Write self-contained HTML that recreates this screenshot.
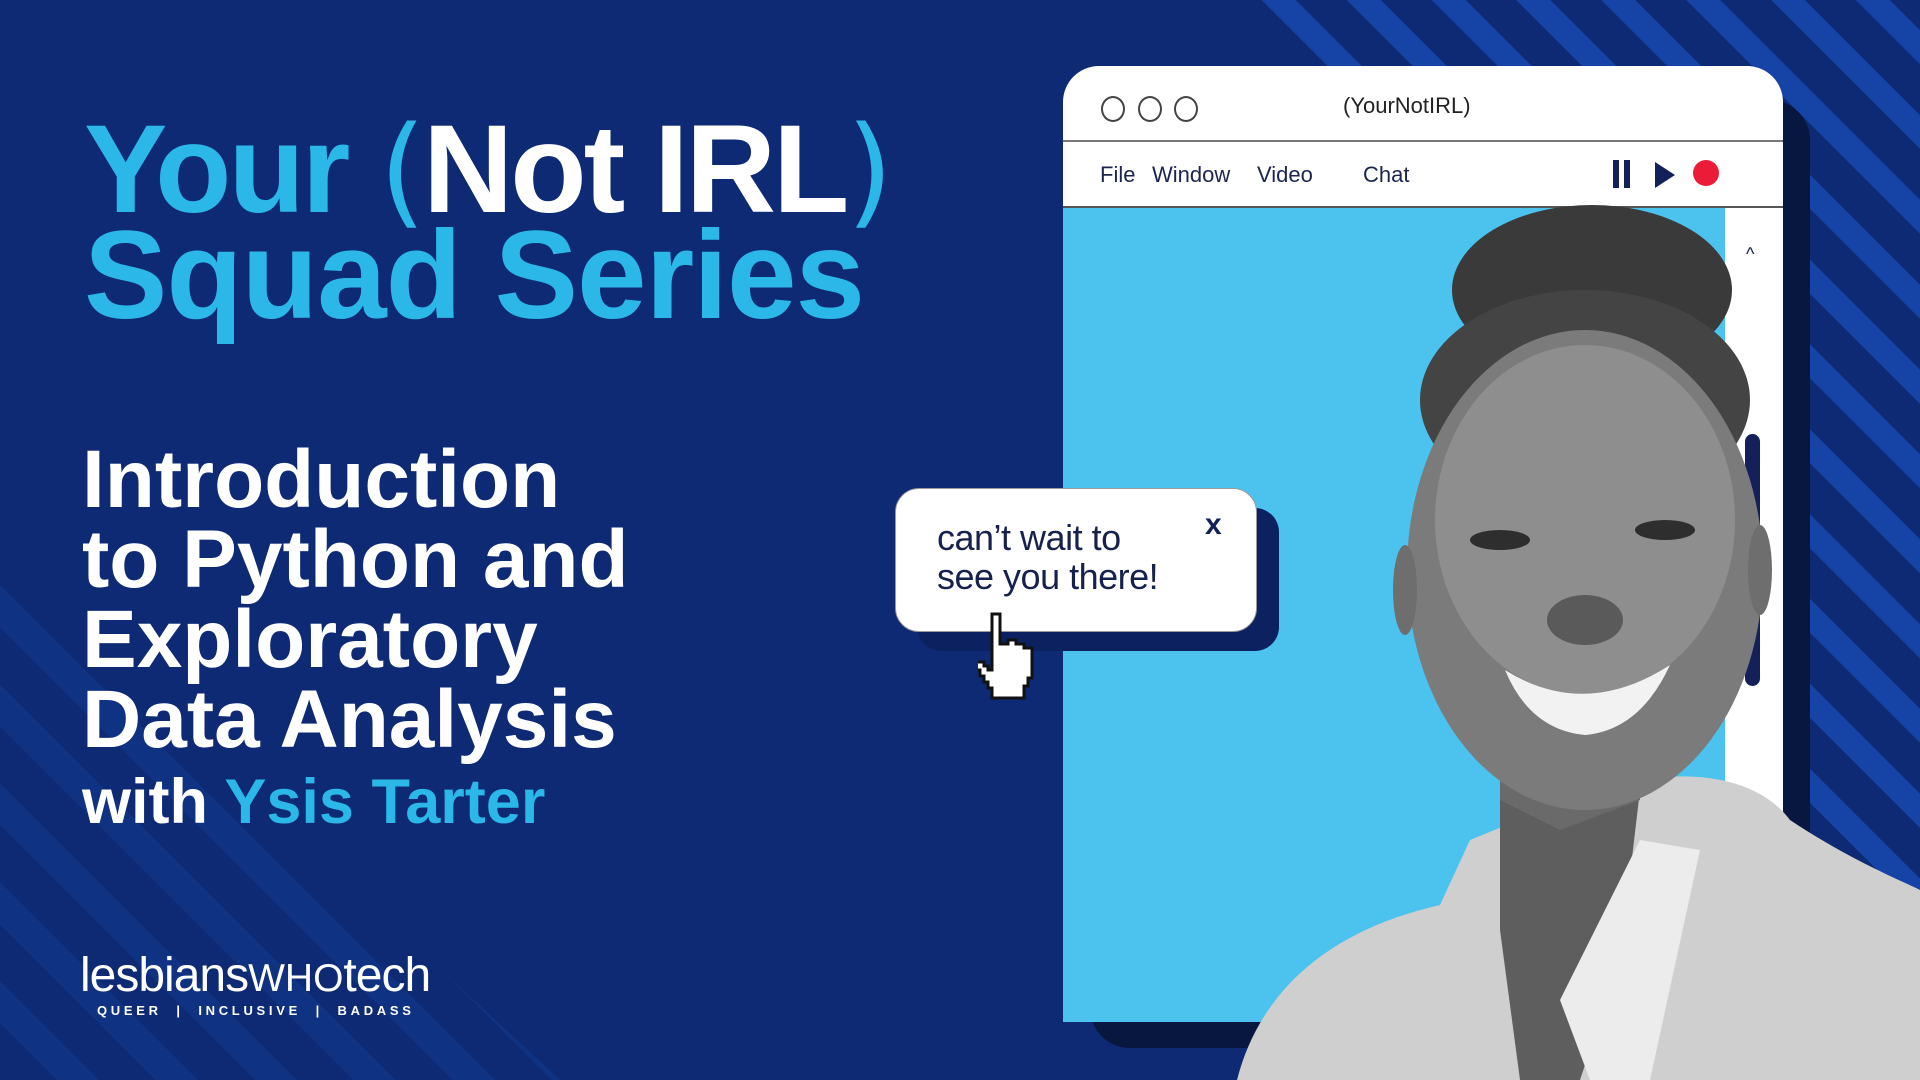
<!DOCTYPE html>
<html><head><meta charset="utf-8">
<style>
html,body{margin:0;padding:0}
body{width:1920px;height:1080px;overflow:hidden;position:relative;background:#0e2a74;font-family:"Liberation Sans",sans-serif}
.abs{position:absolute}
.stripes1{left:0;top:0;width:1920px;height:1080px;background:repeating-linear-gradient(45deg,transparent 0 36px,#1644a6 36px 60px);clip-path:polygon(1240px 0,1920px 0,1920px 1080px,1860px 1080px,1750px 900px)}
.stripes2{left:0;top:0;width:1920px;height:1080px;background:repeating-linear-gradient(45deg,transparent 0 40px,#123a92 40px 70px);clip-path:polygon(0 700px,0 1080px,560px 1080px,0 560px);opacity:.5}
.title{left:84px;top:118px;font-weight:bold;font-size:125px;line-height:104px;color:#2bb8e8;letter-spacing:-3px;white-space:nowrap}
.title .w{color:#fff}
.sub{left:82px;top:440px;font-weight:bold;font-size:82px;line-height:80px;color:#fff;letter-spacing:0;white-space:nowrap}
.with{left:82px;top:766px;font-weight:bold;font-size:63px;color:#fff;white-space:nowrap}
.with span{color:#2bb8e8}
.logo{left:80px;top:948px;color:#fff;font-size:48px;letter-spacing:-1px;white-space:nowrap}
.logo b{font-weight:normal;font-size:39px;letter-spacing:0}
.tag{left:97px;top:1003px;color:#fff;font-size:13px;font-weight:bold;letter-spacing:3.7px;white-space:nowrap}
.shadow{left:1090px;top:100px;width:720px;height:948px;background:#07173f;border-radius:40px}
.win{left:1063px;top:66px;width:720px;height:956px;background:#fff;border-radius:36px 36px 0 0;overflow:hidden}
.bar1{left:0;top:0;width:720px;height:74px;border-bottom:2px solid #777}
.bar2{left:0;top:76px;width:720px;height:64px;border-bottom:2px solid #555}
.circ{top:30px;width:20px;height:22px;border:2px solid #444;border-radius:50%}
.content{left:0;top:142px;width:662px;height:814px;background:#4cc2ee}
.menu{top:96px;font-size:22px;color:#1b2550}
.bubsh{left:917px;top:508px;width:362px;height:143px;background:#0c2260;border-radius:24px}
.bub{left:895px;top:488px;width:362px;height:144px;background:#fff;border-radius:24px;border:1px solid #999;box-sizing:border-box}
.bubt{left:937px;top:518px;font-size:36px;line-height:39px;color:#17214d;letter-spacing:-.5px}
</style></head><body>
<div class="abs stripes1"></div>
<div class="abs stripes2"></div>

<div class="abs title">Your <span style="font-weight:normal;font-family:'DejaVu Sans',sans-serif;font-size:120px">(</span><span class="w">Not IRL</span><span style="font-weight:normal;font-family:'DejaVu Sans',sans-serif;font-size:120px">)</span><br><span style="letter-spacing:-1px">Squad Series</span></div>

<div class="abs sub">Introduction<br>to Python and<br>Exploratory<br>Data Analysis</div>
<div class="abs with">with <span>Ysis Tarter</span></div>

<div class="abs logo">lesbians<b>WHO</b>tech</div>
<div class="abs tag">QUEER &nbsp;| &nbsp;INCLUSIVE &nbsp;| &nbsp;BADASS</div>

<div class="abs shadow"></div>
<div class="abs win">
  <div class="abs bar1"></div>
  <div class="abs circ" style="left:38px"></div>
  <div class="abs circ" style="left:75px"></div>
  <div class="abs circ" style="left:111px"></div>
  <div class="abs" style="left:280px;top:27px;width:124px;text-align:center;font-size:22px;color:#222">(YourNotIRL)</div>
  <div class="abs bar2"></div>
  <div class="abs menu" style="left:37px">File</div>
  <div class="abs menu" style="left:89px">Window</div>
  <div class="abs menu" style="left:194px">Video</div>
  <div class="abs menu" style="left:300px">Chat</div>
  <div class="abs" style="left:550px;top:94px;width:6px;height:28px;background:#13205a"></div>
  <div class="abs" style="left:561px;top:94px;width:6px;height:28px;background:#13205a"></div>
  <svg class="abs" style="left:590px;top:94px" width="24" height="30"><polygon points="2,2 22,15 2,28" fill="#13205a"/></svg>
  <div class="abs" style="left:630px;top:94px;width:26px;height:26px;border-radius:50%;background:#ec1c38"></div>
  <div class="abs content"></div>
  <div class="abs" style="left:683px;top:178px;font-size:18px;color:#13205a">^</div>
  <div class="abs" style="left:682px;top:368px;width:15px;height:252px;border-radius:8px;background:#13205a"></div>
</div>

<svg class="abs" style="left:0;top:0" width="1920" height="1080">
  <path d="M1237 1080 C1260 990 1330 930 1440 905 L1470 840 C1520 820 1560 800 1590 800 L1640 780 C1700 770 1760 780 1790 820 C1850 860 1900 880 1920 890 L1920 1080 Z" fill="#cfcfcf"/>
  <path d="M1500 790 L1640 790 L1620 960 L1580 1080 L1520 1080 L1500 930 Z" fill="#5e5e5e"/>
  <path d="M1560 1000 L1640 840 L1700 850 L1650 1080 L1590 1080 Z" fill="#ececec"/>
  <path d="M1500 700 L1640 700 L1640 800 L1560 830 L1500 800 Z" fill="#6a6a6a"/>
  <ellipse cx="1592" cy="290" rx="140" ry="85" fill="#3a3a3a"/>
  <ellipse cx="1585" cy="400" rx="165" ry="110" fill="#444"/>
  <ellipse cx="1585" cy="570" rx="178" ry="240" fill="#7b7b7b"/>
  <ellipse cx="1585" cy="520" rx="150" ry="175" fill="#8e8e8e"/>
  <ellipse cx="1405" cy="590" rx="12" ry="45" fill="#6e6e6e"/>
  <ellipse cx="1760" cy="570" rx="12" ry="45" fill="#6e6e6e"/>
  <ellipse cx="1500" cy="540" rx="30" ry="10" fill="#2e2e2e"/>
  <ellipse cx="1665" cy="530" rx="30" ry="10" fill="#2e2e2e"/>
  <ellipse cx="1585" cy="620" rx="38" ry="25" fill="#5a5a5a"/>
  <path d="M1505 670 Q1585 720 1670 665 Q1640 730 1585 735 Q1530 730 1505 670 Z" fill="#f2f2f2"/>
</svg>

<div class="abs bubsh"></div>
<div class="abs bub"></div>
<div class="abs bubt">can’t wait to<br>see you there!</div>
<div class="abs" style="left:1205px;top:508px;font-size:30px;font-weight:bold;color:#13205a">x</div>

<svg class="abs" style="left:978px;top:610px" width="70" height="95" viewBox="0 0 70 95">
  <path d="M14 4 h8 v30 h8 v-4 h8 v4 h8 v4 h8 v10 v20 h-4 v8 h-4 v12 h-32 v-10 h-4 v-6 h-4 v-6 h-4 v-6 h-4 v-8 h8 v4 h4 v4 h4 V4 Z" fill="#fff" stroke="#111" stroke-width="3"/>
</svg>
</body></html>
